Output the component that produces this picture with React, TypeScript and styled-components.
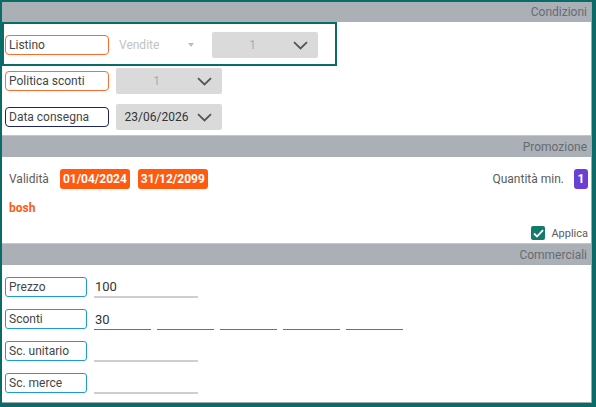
import React from 'react';
import styled, { createGlobalStyle } from 'styled-components';

const GlobalStyle = createGlobalStyle`
  html, body {
    margin: 0;
    padding: 0;
    background: #0b6b67;
  }
  body {
    font-family: Roboto, "Noto Sans", "Liberation Sans", sans-serif;
  }
`;

const Frame = styled.div`
  width: 596px;
  height: 407px;
  box-sizing: border-box;
  padding: 2px 4px 4px 2px;
  background: #0b6b67;
`;

const Panel = styled.div`
  height: 100%;
  box-sizing: border-box;
  background: #fff;
  border-right: 1px solid #a3a8ae;
  border-bottom: 1px solid #a3a8ae;
  display: flex;
  flex-direction: column;
`;

const SectionHeader = styled.div<{ $first?: boolean }>`
  height: ${(p) => (p.$first ? '20px' : '21px')};
  border-top: ${(p) => (p.$first ? 'none' : '1px solid #c3c7cc')};
  background: #abb0b7;
  color: #676b70;
  font-size: 12px;
  display: flex;
  align-items: center;
  justify-content: flex-end;
  padding-right: 4px;
`;

const Conditions = styled.div`
  position: relative;
  height: 113px;
  box-sizing: border-box;
  padding: 10px 3px 5px 3px;
  display: grid;
  grid-auto-rows: 26px;
  row-gap: 10px;
`;

/* selection frame drawn over the first row */
const Highlight = styled.div`
  position: absolute;
  left: 0;
  top: 0;
  width: 335px;
  height: 44px;
  box-sizing: border-box;
  border: 2px solid #0b6b67;
  pointer-events: none;
`;

const Row = styled.div`
  display: flex;
  align-items: center;
`;

const FieldLabel = styled.div<{ $tone: 'orange' | 'navy' | 'blue'; $width: number }>`
  width: ${(p) => p.$width}px;
  height: 20px;
  box-sizing: border-box;
  border: 1.5px solid
    ${(p) => (p.$tone === 'orange' ? '#ff6a2e' : p.$tone === 'navy' ? '#1e2466' : '#1d9bd4')};
  border-radius: ${(p) => (p.$tone === 'blue' ? '3px' : '4px')};
  color: #454545;
  font-size: 12px;
  display: flex;
  align-items: center;
  padding-left: 3px;
  flex-shrink: 0;
`;

const Spinner = styled.div`
  width: 90px;
  margin-left: 7px;
  display: flex;
  align-items: center;
  color: #c2c2c2;
  font-size: 12px;
  padding-left: 3px;
  box-sizing: border-box;
`;

const Caret = styled.span`
  margin-left: auto;
  margin-right: 12px;
  width: 0;
  height: 0;
  border-left: 3.5px solid transparent;
  border-right: 3.5px solid transparent;
  border-top: 4px solid #bdbdbd;
`;

const SelectBox = styled.div<{ $gap: number }>`
  width: 106px;
  height: 26px;
  margin-left: ${(p) => p.$gap}px;
  background: #dadada;
  border-radius: 2px;
  display: flex;
  align-items: center;
  padding-right: 10px;
  box-sizing: border-box;
`;

const SelectText = styled.span<{ $muted?: boolean }>`
  flex: 1;
  text-align: center;
  font-size: 12px;
  color: ${(p) => (p.$muted ? '#ababab' : '#333')};
  padding-left: 6px;
  margin-right: 6px;
`;

const Chevron = () => (
  <svg width="15" height="9" viewBox="0 0 15 9">
    <polyline points="1,1.2 7.5,7.5 14,1.2" fill="none" stroke="#565656" strokeWidth="1.8" />
  </svg>
);

const Promo = styled.div`
  height: 86px;
  box-sizing: border-box;
  padding: 12px 3px 3px 7px;
  display: flex;
  flex-direction: column;
`;

const PromoTop = styled.div`
  height: 20px;
  display: flex;
  align-items: center;
`;

const Muted = styled.span`
  color: #5c5c5c;
  font-size: 12px;
`;

const DateBadge = styled.span<{ $gap: number }>`
  margin-left: ${(p) => p.$gap}px;
  height: 20px;
  padding: 0 3px;
  background: #ff5a0f;
  color: #fff;
  font-size: 12px;
  font-weight: 700;
  border-radius: 3px;
  display: flex;
  align-items: center;
`;

const QtyGroup = styled.div`
  margin-left: auto;
  display: flex;
  align-items: center;
`;

const QtyBadge = styled.span`
  margin-left: 10px;
  width: 14px;
  height: 20px;
  background: #6a3fd4;
  color: #fff;
  font-size: 12px;
  font-weight: 700;
  border-radius: 3px;
  display: flex;
  align-items: center;
  justify-content: center;
`;

const PromoName = styled.div`
  margin-top: 10px;
  height: 18px;
  display: flex;
  align-items: center;
  color: #ff5a14;
  font-size: 12px;
  font-weight: 700;
`;

const ApplyRow = styled.div`
  margin-top: 9px;
  height: 14px;
  display: flex;
  align-items: center;
  justify-content: flex-end;
`;

const CheckBox = styled.span`
  width: 14px;
  height: 14px;
  background: #137a6e;
  border-radius: 2px;
  display: flex;
  align-items: center;
  justify-content: center;
  margin-right: 6px;
`;

const ApplyText = styled.span`
  color: #5c5c5c;
  font-size: 11px;
`;

const Commercial = styled.div`
  flex: 1;
  box-sizing: border-box;
  padding: 12px 3px 0 3px;
  display: grid;
  grid-auto-rows: 22px;
  row-gap: 10px;
  align-content: start;
`;

const CommercialRow = styled.div`
  display: flex;
  align-items: flex-start;
`;

const Inputs = styled.div`
  display: flex;
  gap: 6px;
  margin-left: 7px;
`;

const LineInput = styled.div<{ $width: number; $dark?: boolean }>`
  width: ${(p) => p.$width}px;
  height: 21px;
  box-sizing: border-box;
  border-bottom: ${(p) => (p.$dark ? '1.5px solid #6f6f6f' : '2px solid #cfcfcf')};
  color: #333;
  font-size: 13px;
  padding-left: 1px;
  display: flex;
  align-items: center;
`;

const App: React.FC = () => {
  return (
    <>
      <GlobalStyle />
      <Frame>
        <Panel>
          <SectionHeader $first>Condizioni</SectionHeader>
          <Conditions>
            <Row>
              <FieldLabel $tone="orange" $width={104}>Listino</FieldLabel>
              <Spinner>
                Vendite
                <Caret />
              </Spinner>
              <SelectBox $gap={6}>
                <SelectText $muted>1</SelectText>
                <Chevron />
              </SelectBox>
            </Row>
            <Row>
              <FieldLabel $tone="orange" $width={104}>Politica sconti</FieldLabel>
              <SelectBox $gap={7}>
                <SelectText $muted>1</SelectText>
                <Chevron />
              </SelectBox>
            </Row>
            <Row>
              <FieldLabel $tone="navy" $width={104}>Data consegna</FieldLabel>
              <SelectBox $gap={7}>
                <SelectText>23/06/2026</SelectText>
                <Chevron />
              </SelectBox>
            </Row>
            <Highlight />
          </Conditions>

          <SectionHeader>Promozione</SectionHeader>
          <Promo>
            <PromoTop>
              <Muted>Validità</Muted>
              <DateBadge $gap={11}>01/04/2024</DateBadge>
              <DateBadge $gap={8}>31/12/2099</DateBadge>
              <QtyGroup>
                <Muted>Quantità min.</Muted>
                <QtyBadge>1</QtyBadge>
              </QtyGroup>
            </PromoTop>
            <PromoName>bosh</PromoName>
            <ApplyRow>
              <CheckBox>
                <svg width="11" height="9" viewBox="0 0 11 9">
                  <polyline points="1,4.5 4,7.5 10,1.2" fill="none" stroke="#fff" strokeWidth="1.8" />
                </svg>
              </CheckBox>
              <ApplyText>Applica</ApplyText>
            </ApplyRow>
          </Promo>

          <SectionHeader>Commerciali</SectionHeader>
          <Commercial>
            <CommercialRow>
              <FieldLabel $tone="blue" $width={82}>Prezzo</FieldLabel>
              <Inputs>
                <LineInput $width={104}>100</LineInput>
              </Inputs>
            </CommercialRow>
            <CommercialRow>
              <FieldLabel $tone="blue" $width={82}>Sconti</FieldLabel>
              <Inputs>
                <LineInput $width={57} $dark>30</LineInput>
                <LineInput $width={57} $dark />
                <LineInput $width={57} $dark />
                <LineInput $width={57} $dark />
                <LineInput $width={57} $dark />
              </Inputs>
            </CommercialRow>
            <CommercialRow>
              <FieldLabel $tone="blue" $width={82}>Sc. unitario</FieldLabel>
              <Inputs>
                <LineInput $width={104} />
              </Inputs>
            </CommercialRow>
            <CommercialRow>
              <FieldLabel $tone="blue" $width={82}>Sc. merce</FieldLabel>
              <Inputs>
                <LineInput $width={104} />
              </Inputs>
            </CommercialRow>
          </Commercial>
        </Panel>
      </Frame>
    </>
  );
};

export default App;
